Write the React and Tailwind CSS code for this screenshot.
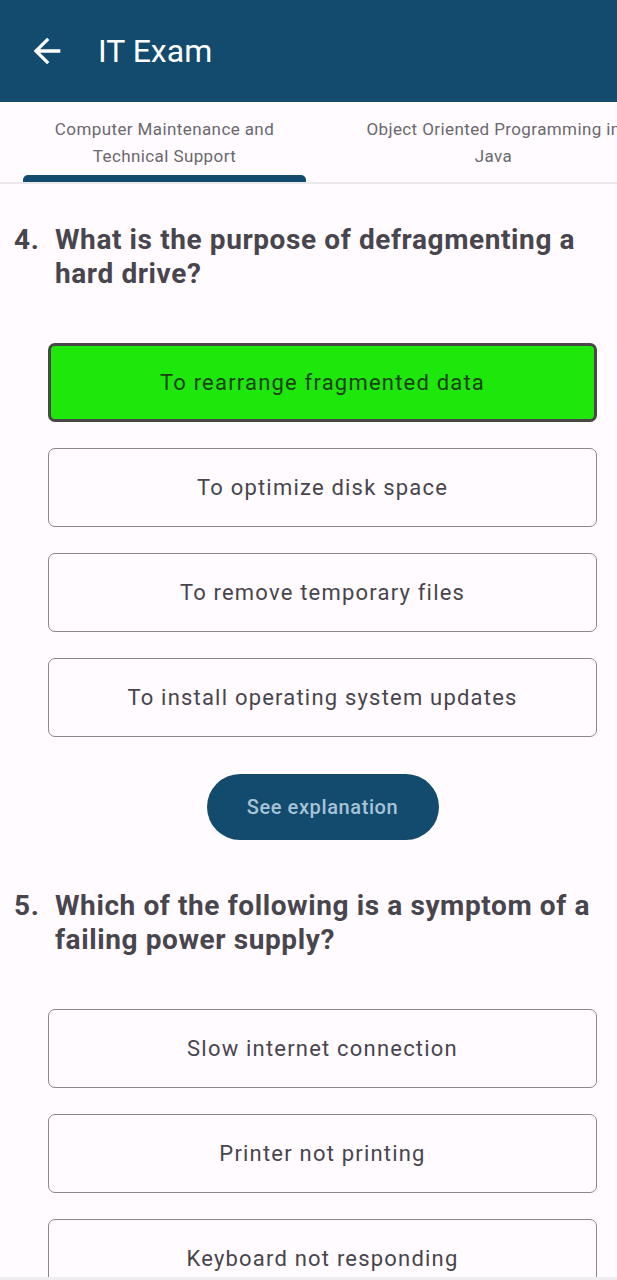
import React from 'react';

const questions = [
  {
    num: 4,
    text: 'What is the purpose of defragmenting a hard drive?',
    options: [
      'To rearrange fragmented data',
      'To optimize disk space',
      'To remove temporary files',
      'To install operating system updates',
    ],
    correct: 0,
    explain: true,
  },
  {
    num: 5,
    text: 'Which of the following is a symptom of a failing power supply?',
    options: ['Slow internet connection', 'Printer not printing', 'Keyboard not responding'],
    correct: -1,
    explain: false,
  },
];

const Question = ({ q }) => (
  <div>
    {/* Question title */}
    <div className="flex pl-[14px] pr-3 text-[28px] font-bold leading-[34px] tracking-[0.6px] text-[#48454e]">
      <span className="w-[41px] shrink-0">{q.num}.</span>
      <span>{q.text}</span>
    </div>

    {/* Options */}
    <div className="mt-[52px] pl-[48px] pr-[20px]">
      <div className="flex flex-col gap-[26px]">
        {q.options.map((opt, i) =>
          i === q.correct ? (
            <div
              key={opt}
              className="flex h-[79px] items-center justify-center rounded-[7px] border-[3px] border-[#474747] bg-[#1ee80b] text-[22px] tracking-[1.2px] text-[#1c3f14]"
            >
              {opt}
            </div>
          ) : (
            <div
              key={opt}
              className="flex h-[79px] items-center justify-center rounded-[7px] border border-[#8a878d] text-[22px] tracking-[1.2px] text-[#48454e]"
            >
              {opt}
            </div>
          )
        )}
      </div>

      {q.explain && (
        <div className="mt-[37px] flex justify-center">
          <button className="h-[66px] w-[232px] rounded-full bg-[#124b6e] text-[20px] font-medium tracking-[0.6px] text-[#a7c3d6]">
            See explanation
          </button>
        </div>
      )}
    </div>
  </div>
);

const App = () => {
  return (
    <div
      className="relative h-[1280px] w-[617px] overflow-hidden bg-[#fffbfe]"
      style={{ fontFamily: 'Roboto, "Liberation Sans", sans-serif' }}
    >
      {/* App bar */}
      <div className="flex h-[102px] items-center bg-[#124b6e] pl-[27px]">
        <svg width="40" height="40" viewBox="0 0 24 24" fill="#ffffff">
          <path d="M20 11H7.83l5.59-5.59L12 4l-8 8 8 8 1.41-1.41L7.83 13H20v-2z" />
        </svg>
        <span className="ml-[31px] text-[32px] text-white">IT Exam</span>
      </div>

      {/* Tabs */}
      <div className="flex h-[82px] overflow-hidden border-b-2 border-[#ebe8ec]">
        <div className="relative flex w-[329px] shrink-0 flex-col items-center pt-[14px] text-center text-[17px] leading-[27px] tracking-[0.4px] text-[#6b6870]">
          <span>Computer Maintenance and</span>
          <span>Technical Support</span>
          <div className="absolute bottom-0 left-[23px] right-[23px] h-[7px] rounded-t-[5px] bg-[#124b6e]" />
        </div>
        <div className="flex w-[329px] shrink-0 flex-col items-center pt-[14px] text-center text-[17px] leading-[27px] tracking-[0.4px] text-[#6b6870]">
          <span className="whitespace-nowrap">Object Oriented Programming in</span>
          <span>Java</span>
        </div>
      </div>

      {/* Questions */}
      <div className="pt-[39px]">
        <Question q={questions[0]} />
        <div className="mt-[49px]">
          <Question q={questions[1]} />
        </div>
      </div>

      <div className="absolute bottom-0 left-0 right-0 h-[3px] bg-[#f0edf1]" />
    </div>
  );
};

export default App;
